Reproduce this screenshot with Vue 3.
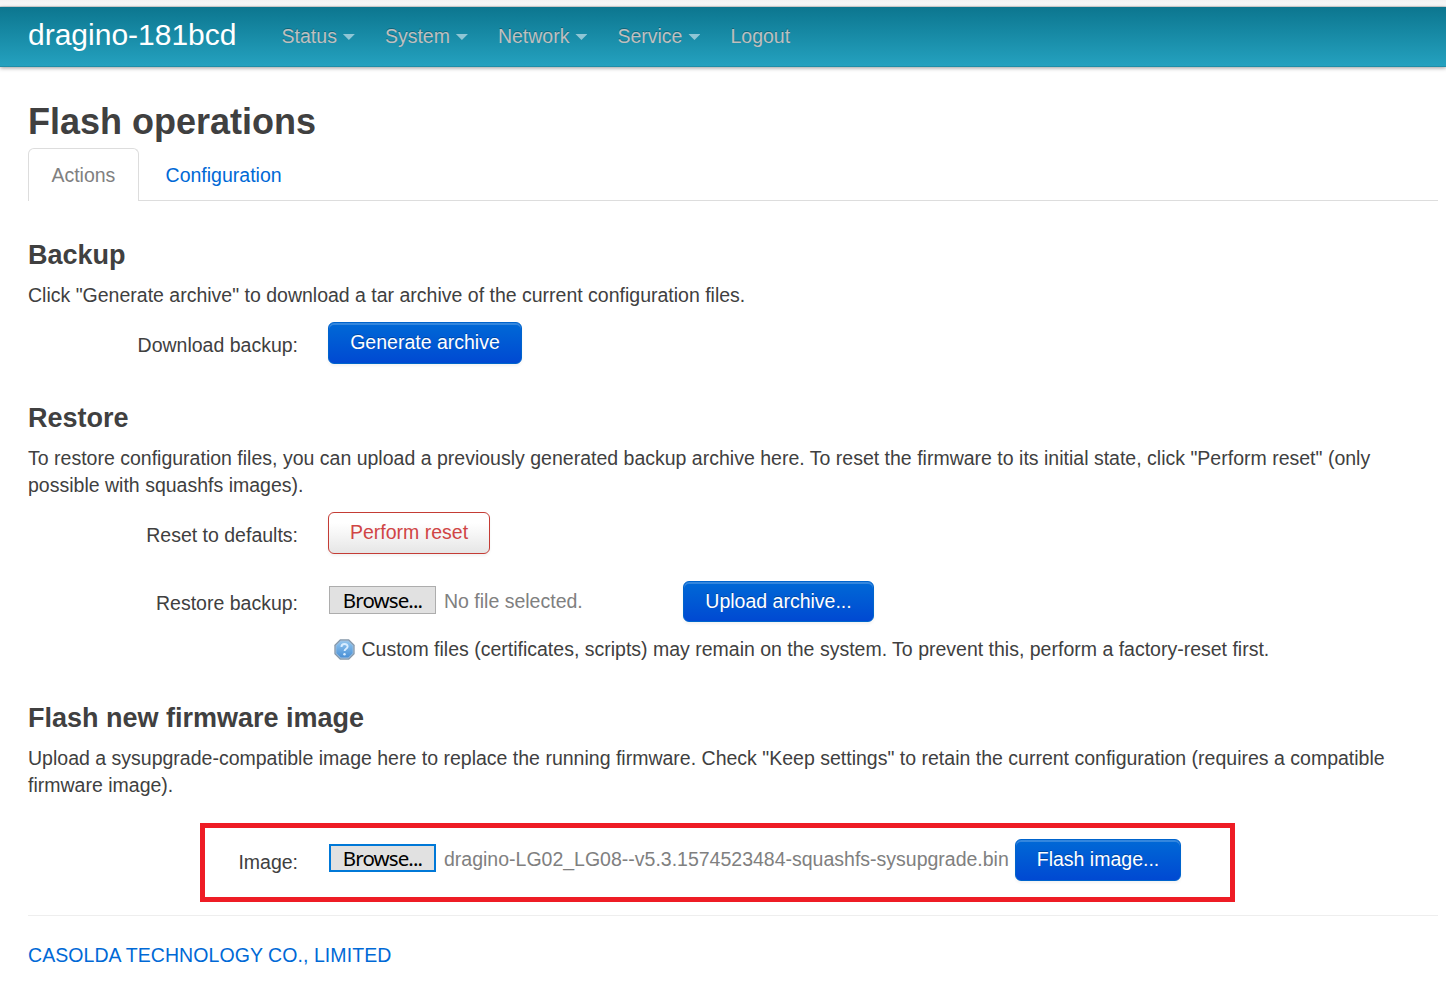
<script setup>
const menu = [
  { label: 'Status', caret: true },
  { label: 'System', caret: true },
  { label: 'Network', caret: true },
  { label: 'Service', caret: true },
  { label: 'Logout', caret: false }
]
</script>

<template>
  <div class="page">
    <div class="top-strip"></div>
    <header class="topbar">
      <a class="brand">dragino-181bcd</a>
      <nav class="menu">
        <a v-for="item in menu" :key="item.label" class="menu-item">
          <span>{{ item.label }}</span>
          <i v-if="item.caret" class="caret"></i>
        </a>
      </nav>
    </header>

    <main class="content">
      <h2>Flash operations</h2>
      <div class="tabs">
        <a class="tab active">Actions</a>
        <a class="tab">Configuration</a>
      </div>

      <section class="backup">
        <h3>Backup</h3>
        <p>Click "Generate archive" to download a tar archive of the current configuration files.</p>
        <div class="row">
          <label>Download backup:</label>
          <button class="btn primary generate">Generate archive</button>
        </div>
      </section>

      <section class="restore">
        <h3>Restore</h3>
        <p class="wide">To restore configuration files, you can upload a previously generated backup archive here. To reset the firmware to its initial state, click "Perform reset" (only<br>possible with squashfs images).</p>
        <div class="row">
          <label>Reset to defaults:</label>
          <button class="btn reset">Perform reset</button>
        </div>
        <div class="row upload-row">
          <label>Restore backup:</label>
          <button class="browse">Browse...</button>
          <span class="file empty">No file selected.</span>
          <button class="btn primary upload">Upload archive...</button>
        </div>
        <div class="help">
          <svg width="21" height="21" viewBox="0 0 22 22">
            <defs>
              <linearGradient id="helpFill" x1="0" y1="0" x2="0" y2="1">
                <stop offset="0" stop-color="#8fc4ee" />
                <stop offset="1" stop-color="#4a90d6" />
              </linearGradient>
            </defs>
            <path d="M6.5 1h9L21 6.500v9L15.500 21h-9L1 15.500v-9z" fill="#9fc0e0" stroke="#8799ab" stroke-width="1.300" stroke-linejoin="round" />
            <path d="M7 2.500h8L19.500 7v8L15 19.500H7L2.500 15V7z" fill="url(#helpFill)" />
            <path d="M7.800 8.300c0-4 6.500-4 6.500-.4 0 2.500-3.200 2.300-3.200 4.800" fill="none" stroke="#d8edff" stroke-width="2" />
            <circle cx="11" cy="16" r="1.300" fill="#d8edff" />
          </svg>
          <span>Custom files (certificates, scripts) may remain on the system. To prevent this, perform a factory-reset first.</span>
        </div>
      </section>

      <section class="flash">
        <h3>Flash new firmware image</h3>
        <p class="wide">Upload a sysupgrade-compatible image here to replace the running firmware. Check "Keep settings" to retain the current configuration (requires a compatible<br>firmware image).</p>
        <div class="row image-row">
          <label>Image:</label>
          <button class="browse focused">Browse...</button>
          <span class="file">dragino-LG02_LG08--v5.3.1574523484-squashfs-sysupgrade.bin</span>
          <button class="btn primary flash-btn">Flash image...</button>
          <div class="highlight"></div>
        </div>
      </section>

      <footer><a>CASOLDA TECHNOLOGY CO., LIMITED</a></footer>
    </main>
  </div>
</template>

<style>
body {
  margin: 0;
  background: #fff;
}
</style>

<style scoped>
.page {
  height: 1007px;
  overflow: hidden;
  background: #fff;
  color: #404040;
  font: 19.5px/27px "Liberation Sans", Arial, sans-serif;
}
.page * {
  box-sizing: border-box;
}
a, p, span, label, button, h2, h3 {
  white-space: nowrap;
}
.top-strip {
  height: 7px;
  background: linear-gradient(#f2f2f2, #fafafa);
  border-bottom: 1px solid #dcdcdc;
}
.topbar {
  display: flex;
  height: 60px;
  padding-left: 28px;
  background: linear-gradient(#0c768f, #25a2c0);
  box-shadow: 0 1px 4px rgba(0, 0, 0, .4), inset 0 -1px 0 rgba(0, 0, 0, .12);
}
.brand {
  width: 253.6px;
  padding-top: 14px;
  color: #fff;
  font-size: 30px;
}
.menu {
  display: flex;
  gap: 30px;
  padding-top: 16px;
  color: #bfbfbf;
  text-shadow: 0 -1px 0 rgba(0, 0, 0, .25);
}
.menu-item {
  display: flex;
  gap: 6px;
}
.caret {
  width: 12px;
  height: 6px;
  margin-top: 11px;
  background: #8fc6d5;
  clip-path: polygon(0 0, 100% 0, 50% 100%);
}
.content {
  padding: 27px 8px 0 28px;
}
h2, h3, p {
  margin: 0;
}
h2 {
  height: 54px;
  font-size: 36px;
  line-height: 55px;
}
h3 {
  height: 54px;
  font-size: 27px;
  line-height: 54px;
}
.wide {
  letter-spacing: .006px;
}
.tabs {
  display: flex;
  height: 53px;
  border-bottom: 1px solid #ddd;
}
.tab {
  height: 53px;
  padding: 14px 0 0 26.6px;
  color: #0069d6;
}
.tab.active {
  width: 111px;
  padding: 13px 0 0 22.4px;
  background: #fff;
  border: 1px solid #ddd;
  border-bottom: 0;
  border-radius: 6px 6px 0 0;
  color: #808080;
}
section {
  padding-top: 27px;
}
.backup {
  height: 190px;
}
.restore {
  height: 300px;
  padding-top: 0;
}
.flash {
  height: 224px;
  padding-top: 0;
}
.row {
  position: relative;
  display: flex;
  height: 42px;
  margin-top: 13px;
}
label {
  width: 270px;
  margin: 10px 30px 0 0;
  text-align: right;
}
button {
  margin: 0;
  font: inherit;
}
.btn {
  height: 42px;
  padding: 0 0 1px;
  border: 1px solid #0064cd;
  border-radius: 6px;
  box-shadow: inset 0 2px 0 rgba(255, 255, 255, .2), 0 2px 3px rgba(0, 0, 0, .05);
}
.primary {
  color: #fff;
  background: linear-gradient(#0069d6, #0049d2);
  text-shadow: 0 -1px 0 rgba(0, 0, 0, .25);
}
.generate {
  width: 194px;
}
.reset {
  width: 162px;
  color: #d04545;
  background: linear-gradient(#fff 25%, #e6e6e6);
  border-color: #c43c35;
}
.upload-row {
  margin-top: 27px;
  height: 41px;
}
.upload-row label {
  margin-top: 9px;
}
.upload {
  width: 191px;
  height: 41px;
}
.flash-btn {
  width: 166px;
}
.browse {
  width: 107px;
  height: 28px;
  margin: 5px 8px 0 1px;
  padding: 1px 0 0;
  background: #e1e1e1;
  border: 1px solid #adadad;
  color: #000;
  font: 20.5px/25px "Noto Sans", sans-serif;
  letter-spacing: -.9px;
}
.focused {
  border: 2px solid #0078d7;
  line-height: 23px;
}
.file {
  width: 571px;
  padding-top: 7px;
  color: #808080;
}
.file.empty {
  width: 239px;
}
.help {
  display: flex;
  margin: 14px 0 0 306px;
}
.help svg {
  margin: 3px 6.500px 0 0;
}
.image-row {
  margin-top: 40px;
}
.highlight {
  position: absolute;
  left: 172px;
  top: -16px;
  width: 1035px;
  height: 79px;
  border: 5px solid #ee1c25;
  pointer-events: none;
}
footer {
  padding-top: 26px;
  border-top: 1px solid #eee;
  color: #0069d6;
  letter-spacing: .07px;
}
</style>
